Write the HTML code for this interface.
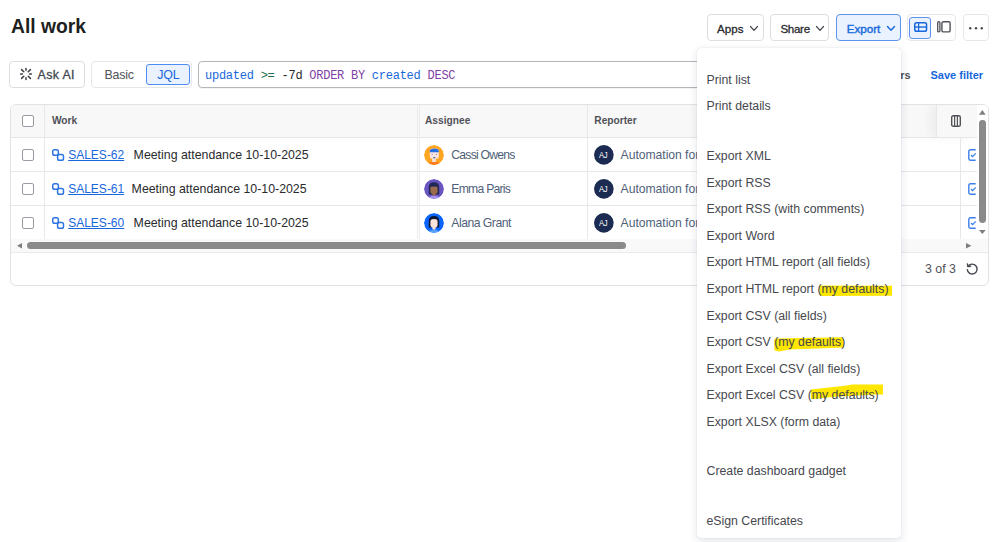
<!DOCTYPE html>
<html><head><meta charset="utf-8">
<style>
*{box-sizing:border-box;margin:0;padding:0}
html,body{width:998px;height:542px;overflow:hidden;background:#fff}
body{position:relative;font-family:"Liberation Sans",sans-serif;color:#292A2E}
.a{position:absolute;white-space:nowrap}
.t{position:absolute;white-space:nowrap;font-size:12.4px;line-height:12.4px}
.btn{position:absolute;border:1px solid #DDDEE1;border-radius:4px;background:#fff}
svg{position:absolute;overflow:visible}
.mono{font-family:"Liberation Mono",monospace}
.hd{position:absolute;white-space:nowrap;font-size:10.2px;line-height:10.2px;font-weight:bold;color:#505258}
.cb{position:absolute;width:12px;height:12px;border:1.2px solid #9A9CA3;border-radius:2px;background:#fff}
.link{color:#1868DB;text-decoration:underline;text-decoration-thickness:1px;text-underline-offset:0.8px}
.nm{position:absolute;white-space:nowrap;font-size:12.2px;line-height:12.2px;color:#505F79}
.mi{position:absolute;left:706.5px;white-space:nowrap;font-size:12.4px;line-height:12.4px;color:#46484E}
.med{-webkit-text-stroke:0.3px currentColor}
</style></head><body>
<div class="a" style="left:11px;top:17.26px;font-size:19.3px;line-height:19.3px;font-weight:bold;color:#1E1F21">All work</div>
<div class="btn" style="left:707px;top:14px;width:57px;height:27px"></div>
<div class="t med" style="left:717px;top:22.68px;font-size:11.6px;line-height:11.6px;color:#292A2E">Apps</div>
<svg style="left:749.6px;top:26.3px" width="8" height="5"><polyline points="0.5,0.5 4,4.3 7.5,0.5" fill="none" stroke="#44474E" stroke-width="1.2" stroke-linecap="round" stroke-linejoin="round"/></svg>
<div class="btn" style="left:770px;top:14px;width:59px;height:27px"></div>
<div class="t med" style="left:780.4px;top:22.68px;font-size:11.6px;line-height:11.6px;color:#292A2E;letter-spacing:-0.3px">Share</div>
<svg style="left:815.7px;top:26.3px" width="8" height="5"><polyline points="0.5,0.5 4,4.3 7.5,0.5" fill="none" stroke="#44474E" stroke-width="1.2" stroke-linecap="round" stroke-linejoin="round"/></svg>
<div class="btn" style="left:836px;top:14px;width:65px;height:27px;background:#E9F2FE;border-color:#5B93EE"></div>
<div class="t" style="left:846.8px;top:22.68px;font-size:11.6px;line-height:11.6px;color:#1868DB;-webkit-text-stroke:0.4px #1868DB">Export</div>
<svg style="left:886.9px;top:26.3px" width="8" height="5"><polyline points="0.5,0.5 4,4.3 7.5,0.5" fill="none" stroke="#1868DB" stroke-width="1.4" stroke-linecap="round" stroke-linejoin="round"/></svg>
<div class="btn" style="left:907px;top:14px;width:49px;height:27px;border-color:#E6E7EA"></div>
<div class="btn" style="left:908.8px;top:16.8px;width:22px;height:22px;background:#E9F2FE;border-color:#5B93EE;border-radius:3px"></div>
<svg style="left:913.6px;top:22.2px" width="14" height="10" viewBox="0 0 14 10"><rect x="0.75" y="0.75" width="11.8" height="8.6" rx="1.8" fill="none" stroke="#1868DB" stroke-width="1.5"/><line x1="0.75" y1="5.05" x2="12.55" y2="5.05" stroke="#1868DB" stroke-width="1.4"/><line x1="4.6" y1="0.75" x2="4.6" y2="9.35" stroke="#1868DB" stroke-width="1.3"/></svg>
<svg style="left:936.8px;top:21.3px" width="14" height="12" viewBox="0 0 14 12"><rect x="0.7" y="0.7" width="2.2" height="10.2" rx="1.1" fill="none" stroke="#505258" stroke-width="1.3"/><rect x="4.9" y="0.7" width="8.2" height="10.2" rx="1.5" fill="none" stroke="#505258" stroke-width="1.4"/></svg>
<div class="btn" style="left:963px;top:14px;width:26px;height:27px;border-color:#E6E7EA"></div>
<svg style="left:969px;top:27px" width="14" height="3"><circle cx="1.2" cy="1.2" r="1.2" fill="#44474E"/><circle cx="7" cy="1.2" r="1.2" fill="#44474E"/><circle cx="12.8" cy="1.2" r="1.2" fill="#44474E"/></svg>
<div class="btn" style="left:9px;top:61px;width:76px;height:27px"></div>
<svg style="left:19.9px;top:68.4px" width="12" height="12" viewBox="0 0 12 12"><g stroke="#3E4046" stroke-width="1.5" stroke-linecap="round"><line x1="6" y1="0.6" x2="6" y2="2.2"/><line x1="6" y1="9.8" x2="6" y2="11.4"/><line x1="0.6" y1="6" x2="2.4" y2="6"/><line x1="9.6" y1="6" x2="11.4" y2="6"/><line x1="1.6" y1="1.6" x2="3.8" y2="3.8"/><line x1="10.4" y1="1.6" x2="8.2" y2="3.8"/><line x1="1.6" y1="10.4" x2="3.8" y2="8.2"/><line x1="10.4" y1="10.4" x2="8.2" y2="8.2"/></g></svg>
<div class="t med" style="left:37.6px;top:68.50px;font-size:12.4px;line-height:12.4px;color:#44474E;letter-spacing:0.35px">Ask AI</div>
<div class="btn" style="left:91px;top:61px;width:101px;height:27px;border-color:#E6E7EA"></div>
<div class="t" style="left:104.5px;top:68.60px;font-size:12.4px;line-height:12.4px;color:#505258;letter-spacing:-0.2px">Basic</div>
<div class="btn" style="left:146px;top:64px;width:43.6px;height:21px;background:#E9F2FE;border-color:#4D8CF0;border-radius:3px"></div>
<div class="t" style="left:157.3px;top:68.60px;font-size:12.4px;line-height:12.4px;color:#1868DB;letter-spacing:-0.2px">JQL</div>
<div class="btn" style="left:198px;top:61px;width:664px;height:27px;border-color:#B3B5BB;box-shadow:0 1px 1px rgba(9,30,66,0.05)"></div>
<div class="a mono" style="left:205px;top:70px;font-size:12px;line-height:12px;letter-spacing:-0.25px"><span style="color:#1868DB">updated</span> <span style="color:#216E4E">&gt;=</span> <span style="color:#292A2E">-7d</span> <span style="color:#803FA5">ORDER BY</span> <span style="color:#1868DB">created</span> <span style="color:#803FA5">DESC</span></div>
<div class="t" style="left:877.6px;top:69.59px;font-size:11px;line-height:11px;font-weight:bold;color:#505258">Filters</div>
<div class="t" style="left:930.5px;top:69.59px;font-size:11px;line-height:11px;font-weight:bold;color:#1868DB">Save filter</div>
<div class="a" style="left:10px;top:104px;width:979px;height:182px;border:1px solid #E2E2E4;border-radius:6px;overflow:hidden;background:#fff">
  <div class="a" style="left:0;top:0;width:977px;height:33px;background:#F8F8F8;border-bottom:1px solid #E6E6E8"></div>
  <div class="a" style="left:925px;top:0;width:41px;height:33px;background:#F8F8F9;border-bottom:1px solid #E7E7E9;border-left:1px solid #E7E7E9;box-shadow:-6px 0 8px rgba(0,0,0,0.045)"></div>
  <div class="a" style="left:966px;top:0;width:11px;height:134px;background:#FFFFFF"></div>
  <div class="a" style="left:0;top:66px;width:966px;height:1px;background:#E7E7E9"></div>
  <div class="a" style="left:0;top:100px;width:966px;height:1px;background:#E7E7E9"></div>
  <div class="a" style="left:0;top:134px;width:977px;height:13px;background:#F9F9FA"></div>
  <div class="a" style="left:0;top:147px;width:977px;height:1px;background:#E9EAEC"></div>
  <div class="a" style="left:33px;top:0;width:1px;height:134px;background:#E7E7E9"></div>
  <div class="a" style="left:406px;top:0;width:1px;height:134px;background:#EBECEE"></div>
  <div class="a" style="left:407.5px;top:0;width:1px;height:134px;background:#EBECEE"></div>
  <div class="a" style="left:576px;top:0;width:1px;height:134px;background:#E7E7E9"></div>
  <div class="a" style="left:949px;top:33px;width:1px;height:101px;background:#E7E7E9"></div>
</div>
<div class="cb" style="left:22px;top:115px"></div>
<div class="hd" style="left:51.9px;top:116.07px;font-size:10.2px;line-height:10.2px;">Work</div>
<div class="hd" style="left:425px;top:116.07px;font-size:10.2px;line-height:10.2px;">Assignee</div>
<div class="hd" style="left:594.3px;top:116.07px;font-size:10.2px;line-height:10.2px;">Reporter</div>
<svg style="left:951px;top:115px" width="10" height="12" viewBox="0 0 10 12"><rect x="0.7" y="0.7" width="8.6" height="10.6" rx="1.6" fill="none" stroke="#505258" stroke-width="1.4"/><line x1="3.6" y1="0.7" x2="3.6" y2="11.3" stroke="#505258" stroke-width="1.2"/><line x1="6.4" y1="0.7" x2="6.4" y2="11.3" stroke="#505258" stroke-width="1.2"/></svg>
<div class="cb" style="left:22px;top:149.1px"></div>
<svg style="left:51.9px;top:148.9px" width="12.2" height="12" viewBox="0 0 12.2 12"><rect x="0.75" y="0.75" width="5.6" height="5.6" rx="1.8" fill="none" stroke="#2D75E2" stroke-width="1.5"/><rect x="5.6" y="5.5" width="5.9" height="5.8" rx="1.8" fill="none" stroke="#2D75E2" stroke-width="1.5"/></svg>
<div class="t link" style="left:68.2px;top:148.64px;font-size:12px;line-height:12px;">SALES-62</div>
<div class="t" style="left:133.6px;top:148.65px;font-size:12.35px;line-height:12.35px;color:#292A2E">Meeting attendance 10-10-2025</div>
<svg style="left:424.2px;top:144.7px" width="20" height="20" viewBox="0 0 20 20"><defs><clipPath id="c0"><circle cx="10" cy="10" r="10"/></clipPath></defs><g clip-path="url(#c0)"><circle cx="10" cy="10" r="10" fill="#FFA51F"/><path d="M3.5 18.5 Q10 14.5 16.5 18.5 L16.5 20 L3.5 20 Z" fill="#FF7A1A"/><rect x="8.2" y="12" width="3.6" height="5" fill="#F7E3E3"/><rect x="5.8" y="3.6" width="9.1" height="10.4" rx="3" fill="#F7E3E3"/><path d="M5.8 7.2 V6.2 Q5.8 3.6 10.35 3.6 Q14.9 3.6 14.9 6.2 V7.2 Z" fill="#2A6FE0"/><ellipse cx="10.3" cy="12.7" rx="1.3" ry="0.8" fill="#5E6C84"/><circle cx="8.2" cy="9.3" r="0.6" fill="#B08A8A"/><circle cx="12.4" cy="9.3" r="0.6" fill="#B08A8A"/></g></svg>
<div class="nm" style="left:451.3px;top:148.77px;font-size:12.2px;line-height:12.2px;letter-spacing:-0.78px">Cassi Owens</div>
<svg style="left:593.8px;top:145.1px" width="20" height="20"><circle cx="9.85" cy="9.85" r="9.85" fill="#1C2B52"/></svg>
<div class="a" style="left:598.9px;top:149.77px;font-size:9.6px;line-height:9.6px;color:#fff;letter-spacing:-0.5px;transform:scaleX(0.8);transform-origin:0 0">AJ</div>
<div class="nm" style="left:620.6px;top:148.77px;font-size:12.2px;line-height:12.2px;letter-spacing:-0.05px">Automation for Jira</div>
<svg style="left:968.3px;top:148.9px" width="8" height="12" viewBox="0 0 8 12"><path d="M7.7 0.8 H2.4 A1.6 1.6 0 0 0 0.8 2.4 V9.6 A1.6 1.6 0 0 0 2.4 11.2 H7.7" fill="none" stroke="#3D7EEA" stroke-width="1.4"/><polyline points="3,6 4.6,7.6 7.8,4.4" fill="none" stroke="#3D7EEA" stroke-width="1.3"/></svg>
<div class="cb" style="left:22px;top:183.1px"></div>
<svg style="left:51.9px;top:182.9px" width="12.2" height="12" viewBox="0 0 12.2 12"><rect x="0.75" y="0.75" width="5.6" height="5.6" rx="1.8" fill="none" stroke="#2D75E2" stroke-width="1.5"/><rect x="5.6" y="5.5" width="5.9" height="5.8" rx="1.8" fill="none" stroke="#2D75E2" stroke-width="1.5"/></svg>
<div class="t link" style="left:68.2px;top:182.64px;font-size:12px;line-height:12px;">SALES-61</div>
<div class="t" style="left:131.6px;top:182.65px;font-size:12.35px;line-height:12.35px;color:#292A2E">Meeting attendance 10-10-2025</div>
<svg style="left:424.2px;top:178.7px" width="20" height="20" viewBox="0 0 20 20"><defs><clipPath id="c1"><circle cx="10" cy="10" r="10"/></clipPath></defs><g clip-path="url(#c1)"><circle cx="10" cy="10" r="10" fill="#6A55C0"/><path d="M3.5 18.5 Q10 15 16.5 18.5 L16.5 20 L3.5 20 Z" fill="#A593EE"/><path d="M4.8 15.5 V8 Q4.8 3.2 10 3.2 Q15.2 3.2 15.2 8 V15.5 Z" fill="#1E2A55"/><rect x="8.5" y="12.5" width="3" height="4" fill="#9C6B4D"/><rect x="6.4" y="6.5" width="7.2" height="8.3" rx="2.6" fill="#9C6B4D"/><rect x="6" y="5" width="8" height="2.6" fill="#1E2A55"/></g></svg>
<div class="nm" style="left:451.3px;top:182.77px;font-size:12.2px;line-height:12.2px;letter-spacing:-0.75px">Emma Paris</div>
<svg style="left:593.8px;top:179.1px" width="20" height="20"><circle cx="9.85" cy="9.85" r="9.85" fill="#1C2B52"/></svg>
<div class="a" style="left:598.9px;top:183.77px;font-size:9.6px;line-height:9.6px;color:#fff;letter-spacing:-0.5px;transform:scaleX(0.8);transform-origin:0 0">AJ</div>
<div class="nm" style="left:620.6px;top:182.77px;font-size:12.2px;line-height:12.2px;letter-spacing:-0.05px">Automation for Jira</div>
<svg style="left:968.3px;top:182.9px" width="8" height="12" viewBox="0 0 8 12"><path d="M7.7 0.8 H2.4 A1.6 1.6 0 0 0 0.8 2.4 V9.6 A1.6 1.6 0 0 0 2.4 11.2 H7.7" fill="none" stroke="#3D7EEA" stroke-width="1.4"/><polyline points="3,6 4.6,7.6 7.8,4.4" fill="none" stroke="#3D7EEA" stroke-width="1.3"/></svg>
<div class="cb" style="left:22px;top:217.1px"></div>
<svg style="left:51.9px;top:216.9px" width="12.2" height="12" viewBox="0 0 12.2 12"><rect x="0.75" y="0.75" width="5.6" height="5.6" rx="1.8" fill="none" stroke="#2D75E2" stroke-width="1.5"/><rect x="5.6" y="5.5" width="5.9" height="5.8" rx="1.8" fill="none" stroke="#2D75E2" stroke-width="1.5"/></svg>
<div class="t link" style="left:68.2px;top:216.64px;font-size:12px;line-height:12px;">SALES-60</div>
<div class="t" style="left:133.6px;top:216.65px;font-size:12.35px;line-height:12.35px;color:#292A2E">Meeting attendance 10-10-2025</div>
<svg style="left:424.2px;top:212.7px" width="20" height="20" viewBox="0 0 20 20"><defs><clipPath id="c2"><circle cx="10" cy="10" r="10"/></clipPath></defs><g clip-path="url(#c2)"><circle cx="10" cy="10" r="10" fill="#0B66FF"/><path d="M3.5 18.5 Q10 15 16.5 18.5 L16.5 20 L3.5 20 Z" fill="#5AA2FF"/><path d="M4.8 14.5 V8 Q4.8 3 10 3 Q15.2 3 15.2 8 V14.5 Z" fill="#0C1733"/><rect x="8.5" y="12.5" width="3" height="4" fill="#FBE3DA"/><rect x="6.4" y="6" width="7.2" height="8.5" rx="2.8" fill="#FBE3DA"/><path d="M6 7 Q8 4.5 10 6.5 Q12 4.5 14 7 L14 5 L6 5 Z" fill="#0C1733"/></g></svg>
<div class="nm" style="left:451.3px;top:216.77px;font-size:12.2px;line-height:12.2px;letter-spacing:-0.5px">Alana Grant</div>
<svg style="left:593.8px;top:213.1px" width="20" height="20"><circle cx="9.85" cy="9.85" r="9.85" fill="#1C2B52"/></svg>
<div class="a" style="left:598.9px;top:217.77px;font-size:9.6px;line-height:9.6px;color:#fff;letter-spacing:-0.5px;transform:scaleX(0.8);transform-origin:0 0">AJ</div>
<div class="nm" style="left:620.6px;top:216.77px;font-size:12.2px;line-height:12.2px;letter-spacing:-0.05px">Automation for Jira</div>
<svg style="left:968.3px;top:216.9px" width="8" height="12" viewBox="0 0 8 12"><path d="M7.7 0.8 H2.4 A1.6 1.6 0 0 0 0.8 2.4 V9.6 A1.6 1.6 0 0 0 2.4 11.2 H7.7" fill="none" stroke="#3D7EEA" stroke-width="1.4"/><polyline points="3,6 4.6,7.6 7.8,4.4" fill="none" stroke="#3D7EEA" stroke-width="1.3"/></svg>
<svg style="left:16.6px;top:243px" width="5" height="6"><polygon points="5,0 5,5.4 0,2.7" fill="#7E7E7E"/></svg>
<div class="a" style="left:26.6px;top:241.8px;width:599px;height:7.2px;border-radius:3.6px;background:#8A8A8A"></div>
<svg style="left:965.9px;top:242.7px" width="6" height="6"><polygon points="0,0 0,5.4 5.4,2.7" fill="#7E7E7E"/></svg>
<svg style="left:979.2px;top:109.9px" width="7" height="5"><polygon points="0,4.7 6.7,4.7 3.35,0" fill="#7E7E7E"/></svg>
<div class="a" style="left:979.2px;top:120px;width:6.8px;height:103px;border-radius:3.4px;background:#8A8A8A"></div>
<svg style="left:979.2px;top:229.7px" width="7" height="5"><polygon points="0,0 6.7,0 3.35,4" fill="#7E7E7E"/></svg>
<div class="t" style="left:925px;top:262.80px;font-size:12.4px;line-height:12.4px;color:#505258">3 of 3</div>
<svg style="left:965.9px;top:263.2px" width="12" height="12" viewBox="0 0 12 12"><path d="M2.2 3.2 A4.9 4.9 0 1 1 1.3 6.6" fill="none" stroke="#44474E" stroke-width="1.4" stroke-linecap="round"/><polyline points="1.4,0.9 1.9,3.6 4.6,3.2" fill="none" stroke="#44474E" stroke-width="1.4" stroke-linecap="round" stroke-linejoin="round"/></svg>
<div class="a" style="left:697px;top:48px;width:204px;height:490px;background:#fff;border-radius:4px;box-shadow:0 0 1px rgba(9,30,66,0.22),0 3px 10px rgba(9,30,66,0.12)"></div>
<svg style="left:0;top:0" width="998" height="542">
<path d="M819.5 285.6 L892 285.8 L892 295.7 L822 295.9 L819.5 294.5 Z" fill="#FFE600"/>
<path d="M775 338.6 L842 337.2 L844 340 L844 347.5 L790 349.5 L779 351.6 L774.5 350.5 L774 340 Z" fill="#FFE600"/>
<path d="M810.8 389.4 L846.9 385.6 L852.3 384.5 L883 384.5 L883 394.4 L874.8 394.6 L831.6 397.1 L811.7 399.3 L810.8 398 Z" fill="#FFE600"/>
</svg>
<div class="mi" style="left:706.5px;top:73.79px;font-size:12.3px;line-height:12.3px;">Print list</div>
<div class="mi" style="left:706.5px;top:100.39px;font-size:12.3px;line-height:12.3px;">Print details</div>
<div class="mi" style="left:706.5px;top:149.99px;font-size:12.3px;line-height:12.3px;">Export XML</div>
<div class="mi" style="left:706.5px;top:176.58px;font-size:12.3px;line-height:12.3px;">Export RSS</div>
<div class="mi" style="left:706.5px;top:203.17px;font-size:12.3px;line-height:12.3px;">Export RSS (with comments)</div>
<div class="mi" style="left:706.5px;top:229.76px;font-size:12.3px;line-height:12.3px;">Export Word</div>
<div class="mi" style="left:706.5px;top:256.35px;font-size:12.3px;line-height:12.3px;">Export HTML report (all fields)</div>
<div class="mi" style="left:706.5px;top:282.94px;font-size:12.3px;line-height:12.3px;">Export HTML report (my defaults)</div>
<div class="mi" style="left:706.5px;top:309.53px;font-size:12.3px;line-height:12.3px;">Export CSV (all fields)</div>
<div class="mi" style="left:706.5px;top:336.12px;font-size:12.3px;line-height:12.3px;">Export CSV (my defaults)</div>
<div class="mi" style="left:706.5px;top:362.71px;font-size:12.3px;line-height:12.3px;">Export Excel CSV (all fields)</div>
<div class="mi" style="left:706.5px;top:389.30px;font-size:12.3px;line-height:12.3px;">Export Excel CSV (my defaults)</div>
<div class="mi" style="left:706.5px;top:415.89px;font-size:12.3px;line-height:12.3px;">Export XLSX (form data)</div>
<div class="mi" style="left:706.5px;top:465.49px;font-size:12.3px;line-height:12.3px;">Create dashboard gadget</div>
<div class="mi" style="left:706.5px;top:515.09px;font-size:12.3px;line-height:12.3px;">eSign Certificates</div>
</body></html>
